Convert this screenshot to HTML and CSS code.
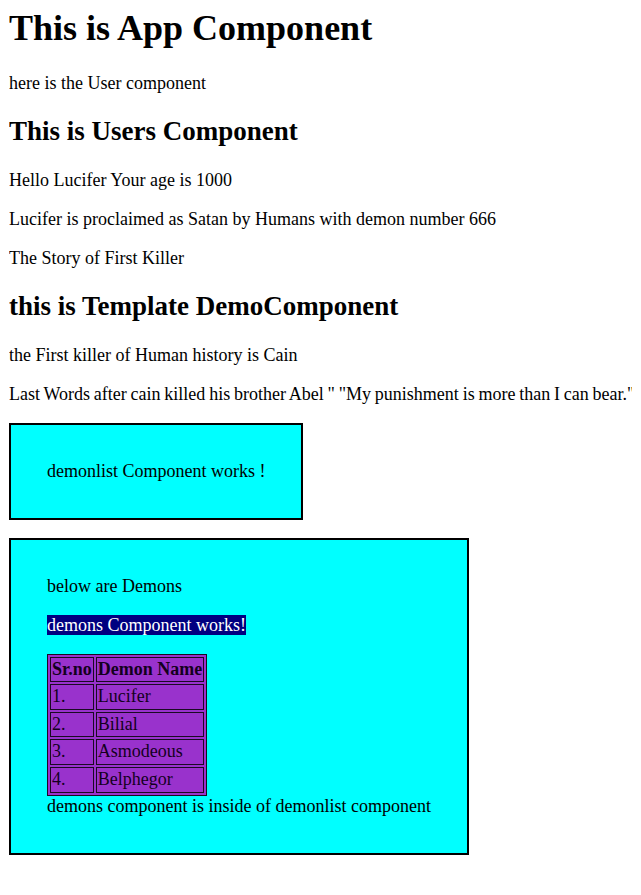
FILE: index.html
```html
<!DOCTYPE html>
<html lang="en">
<head>
<meta charset="utf-8">
<title>App</title>
<link rel="stylesheet" href="styles.css">
</head>
<body>
<h1 class="app-title">This is App Component</h1>
<p class="text">here is the User component</p>
<h2 class="section-title">This is Users Component</h2>
<p class="text">Hello Lucifer Your age is 1000</p>
<p class="text">Lucifer is proclaimed as Satan by Humans with demon number 666</p>
<p class="text">The Story of First Killer</p>
<h2 class="section-title">this is Template DemoComponent</h2>
<p class="text">the First killer of Human history is Cain</p>
<p class="text nowrap">Last Words after cain killed his brother Abel " "My punishment is more than I can bear."</p>
<div class="box box-small">
  <p class="text">demonlist Component works !</p>
</div>
<div class="box box-large">
  <p class="text">below are Demons</p>
  <p class="text"><span class="highlight">demons Component works!</span></p>
  <table class="demon-table">
    <tr><th>Sr.no</th><th>Demon Name</th></tr>
    <tr><td>1.</td><td>Lucifer</td></tr>
    <tr><td>2.</td><td>Bilial</td></tr>
    <tr><td>3.</td><td>Asmodeous</td></tr>
    <tr><td>4.</td><td>Belphegor</td></tr>
  </table>
  <p class="text after-table">demons component is inside of demonlist component</p>
</div>
</body>
</html>
```
FILE: styles.css
```css
html {
  background: #ffffff;
}
body {
  margin: 0 9px;
  font-family: "Liberation Serif", "Times New Roman", serif;
  color: #000000;
  font-size: 18px;
}
.app-title {
  font-size: 36px;
  font-weight: bold;
  margin: 7px 0 24px;
}
.section-title {
  font-size: 27px;
  font-weight: bold;
  margin: 22.4px 0;
}
.text {
  font-size: 18px;
  margin: 18px 0;
}
.nowrap {
  white-space: nowrap;
  word-spacing: -0.7px;
}
.box {
  background: #00ffff;
  border: 2px solid #000000;
  padding: 18px 36px;
  margin: 18px 0;
}
.box-small {
  width: 250px;
  padding-right: 4px;
}
.box-small .text {
  white-space: nowrap;
}
.box-large {
  width: 384px;
}
.highlight {
  background: #000080;
  color: #ffffff;
}
.demon-table {
  background: #9932cc;
  border: 1px solid #1a0a22;
  border-spacing: 2px;
  font-size: 18px;
  color: #14001e;
}
.demon-table th,
.demon-table td {
  border: 1px solid #1a0a22;
  padding: 1px;
  line-height: 21.6px;
  text-align: left;
}
.demon-table th {
  font-weight: bold;
}
.after-table {
  margin-top: 0;
}
```
